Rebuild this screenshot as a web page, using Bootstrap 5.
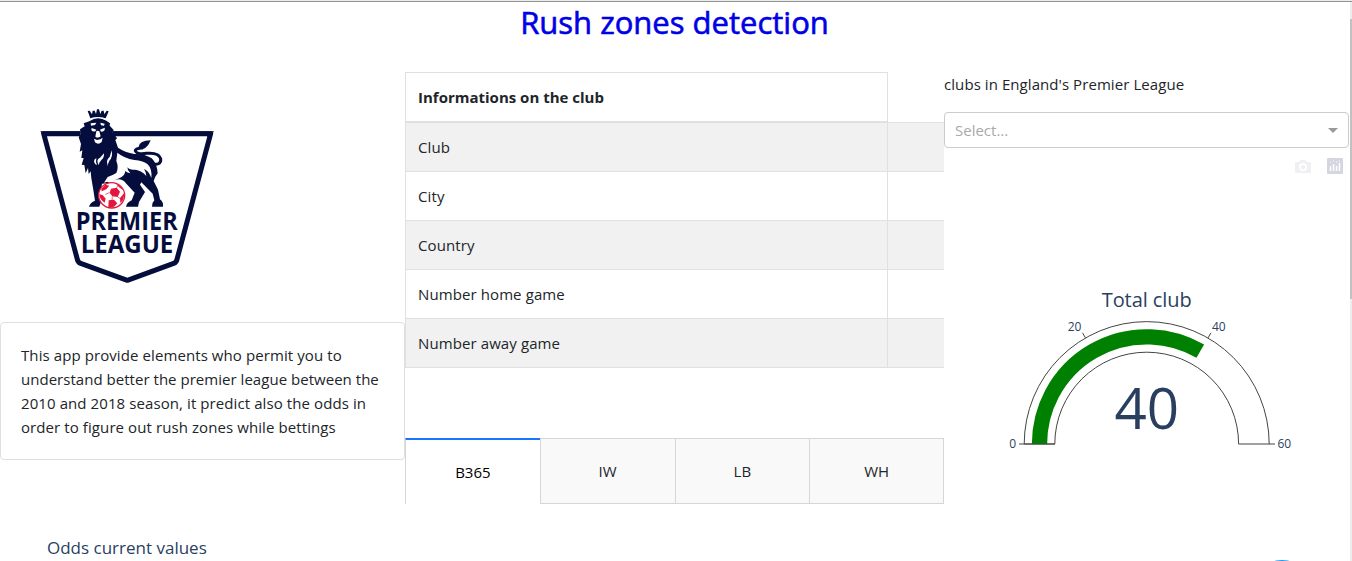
<!DOCTYPE html>
<html lang="en">
<head>
<meta charset="utf-8">
<meta name="viewport" content="width=device-width, initial-scale=1">
<title>Rush zones detection</title>
<link href="https://cdn.jsdelivr.net/npm/bootstrap@5.3.0/dist/css/bootstrap.min.css" rel="stylesheet">
<style>
body{font-family:"Open Sans","Noto Sans",sans-serif;font-size:15px;line-height:24px;color:#212529;height:561px;overflow:hidden;background:#fff}
.topline{height:2px;background:#ececec;border-bottom:1px solid #949494}
.page-body{width:1349px}
h1.title{font-size:31px;font-weight:500;line-height:38px;color:#0000e6;height:70px;padding-top:1px;-webkit-text-stroke:.6px #0000e6}
.side{width:405px}
.middle{width:539px}
.logo-box{height:250px;padding:28px 0 0 30px}
.about{height:138px;border:1px solid #dfdfdf;border-radius:4px;padding:20px}
.about span{display:block;white-space:nowrap;letter-spacing:.09px}
.about span:nth-child(2){letter-spacing:.03px}
.odds{font-size:17px;color:#2a3f5f;margin:76px 0 0 47px}
.club-wrap{height:366px}
.club-table{width:800px;table-layout:fixed;border-collapse:collapse;margin:0}
.club-table th,.club-table td{padding:12px;border:1px solid #dee0e2}
.club-table th{border-bottom-width:2px}
.club-table td{letter-spacing:.1px}
.club-table tbody tr:nth-child(odd){background:#f1f1f1}
.club-table col:first-child{width:482px}
.odds-tabs{height:66px}
.odds-tabs button{width:134.75px;background:#f9f9f9;border:1px solid #d6d6d6;border-right:0;color:#212529;padding:0}
.odds-tabs button:last-child{border-right:1px solid #d6d6d6}
.odds-tabs button.active{background:#fff;color:#000;border-top:2px solid #1975fa;border-bottom:0}
.pick{height:36px;border:1px solid #ccc;border-radius:4px;padding:0 10px;color:#aaa}
.label-line{height:40px;letter-spacing:.07px}
.modebar{height:28px;padding:10px 6px 0 0;gap:16px}
.scroll{position:fixed;right:0;top:2px;width:2px;height:559px;background:#ededed}
.scroll i{display:block;margin-top:17px;height:280px;background:#c1c1c1}
.bubble{position:fixed;left:1252px;top:560px;width:60px;height:60px;border-radius:50%;background:#119dff}
svg{display:block}
</style>
</head>
<body>
<div class="topline"></div>
<div class="page-body">
  <h1 class="title text-center m-0">Rush zones detection</h1>
  <div class="d-flex">
    <div class="side flex-shrink-0">
      <div class="logo-box">
        <svg width="195" height="190" viewBox="0 0 585 570" role="img" aria-label="Premier League">
          <path d="M41 101H542L441 478Q439 487 431 490L292 541L152 490Q144 487 142 478Z" fill="#fff" stroke="#050d3c" stroke-width="15" stroke-linejoin="round"/>
          <path d="M31 94H552L538 118L531 108H52L45 118Z" fill="#050d3c"/>
          <path d="M152 88H249V115H152Z" fill="#fff"/>
          <g transform="translate(135 0)" fill="#050d3c">
            <path d="M46 55L38 33L44 32L51 43L53 32H59L63 42L66 28H72L76 42L80 32H86L88 43L95 32L101 34L92 55Q68 47 46 55Z"/>
            <path d="M43 64Q68 46 94 62L105 70L104 77L116 90L113 97L126 115L121 120L129 143Q150 157 178 162Q207 160 230 175Q246 190 248 220Q239 231 236 243L249 269L255 298Q266 306 264 320H231Q230 309 238 301L233 281L199 247L195 254L210 276L192 306L189 320H153Q156 307 170 301L179 278L152 249Q141 234 121 239L104 249L81 251L77 276L78 305L73 320H42Q46 307 60 302L55 270L49 235L47 214L41 222L39 204L32 220L28 195L20 194L26 174L19 174L22 151L14 155L18 132L11 112L17 103L15 88L29 79L26 70Z"/>
            <path d="M204 143Q180 145 181 153Q186 164 215 160Q252 157 257 176Q260 199 225 191" fill="none" stroke="#050d3c" stroke-width="9"/>
            <path d="M191 140Q193 122 227 121Q218 144 202 148Z"/>
            <g fill="#fff">
              <path d="M127 158Q148 175 178 180Q206 182 218 193Q232 207 229 234Q221 212 207 207Q213 215 214 228Q200 211 181 209Q163 211 157 202Q157 211 166 220Q156 218 151 213Q150 229 132 235L119 241Q113 254 97 245L87 248L98 231Q113 226 124 219Q132 201 124 183Z"/>
              <path d="M110 151Q114 173 103 182Q98 191 99 199Q91 181 104 171Z"/>
              <path d="M87 160Q88 174 79 180Q71 188 72 196Q61 179 75 173Z"/>
              <path d="M64 174Q61 187 66 195Q55 191 58 179Z"/>
              <path d="M50 84L64 89L61 94Q46 96 50 84ZM75 89L89 83Q92 94 78 95ZM64 94L68 92L73 94L77 109Q69 116 61 110ZM57 116L66 120L76 118L83 113L80 126Q70 136 60 127ZM47 70L64 68L60 75L48 77ZM76 68L89 71L87 77L78 76Z"/>
            </g>
          </g>
          <ellipse cx="245" cy="286" rx="39" ry="38" fill="#fff" stroke="#e3173e" stroke-width="4"/>
          <path fill="#e3173e" d="M243 266L260 263L270 275L263 291L247 289L239 278ZM214 266L226 254L238 257L229 268L215 274ZM208 283L218 285L227 296L224 308Q209 300 208 283ZM236 301L252 299L262 310Q250 327 235 321ZM270 294L282 280Q284 300 271 309ZM258 252Q275 257 279 270L269 263Z"/>
          <path fill="none" stroke="#e3173e" stroke-width="2" d="M239 278L226 283M247 289L246 301M263 291L271 296M260 263L264 256"/>
          <g fill="#050d3c" font-family="'Open Sans',sans-serif" font-weight="700">
            <text x="137" y="391" font-size="74" textLength="306" lengthAdjust="spacingAndGlyphs">PREMIER</text>
            <text x="152" y="460" font-size="74" textLength="278" lengthAdjust="spacingAndGlyphs">LEAGUE</text>
          </g>
        </svg>
      </div>
      <div class="about"><span>This app provide elements who permit you to</span><span>understand better the premier league between the</span><span>2010 and 2018 season, it predict also the odds in</span><span>order to figure out rush zones while bettings</span></div>
      <div class="odds">Odds current values</div>
    </div>
    <div class="middle flex-shrink-0">
      <div class="club-wrap overflow-hidden">
        <table class="club-table">
          <colgroup><col><col></colgroup>
          <thead><tr><th>Informations on the club</th></tr></thead>
          <tbody>
            <tr><td>Club</td><td></td></tr>
            <tr><td>City</td><td></td></tr>
            <tr><td>Country</td><td></td></tr>
            <tr><td>Number home game</td><td></td></tr>
            <tr><td>Number away game</td><td></td></tr>
          </tbody>
        </table>
      </div>
      <div class="odds-tabs d-flex">
        <button class="active">B365</button><button>IW</button><button>LB</button><button>WH</button>
      </div>
    </div>
    <div class="side flex-shrink-0">
      <div class="label-line">clubs in England's Premier League</div>
      <div class="pick d-flex align-items-center justify-content-between"><span>Select...</span>
        <svg width="10" height="5"><path d="M0 0H10L5 5Z" fill="#999"/></svg></div>
      <div class="modebar d-flex justify-content-end">
        <svg width="16" height="16" viewBox="0 0 16 16"><path fill="#f0f0f2" fill-rule="evenodd" d="M1 4H4L5.500 2H10.500L12 4H15Q16 4 16 5V14Q16 15 15 15H1Q0 15 0 14V5Q0 4 1 4ZM8 5A4 4 0 1 0 8 13A4 4 0 1 0 8 5ZM8 7A2.200 2.200 0 1 1 8 11.400A2.200 2.200 0 1 1 8 7Z"/></svg>
        <svg width="16" height="16"><rect width="16" height="16" rx="1" fill="#d3d6df"/><path d="M3.500 8V13M6.500 6V13M9.500 8V13M12.500 5V13" stroke="#fff" stroke-width="1.500"/><path d="M3 4H4M6 3H7M9 4H10M12 3H13" stroke="#fff"/></svg>
      </div>
      <svg width="405" height="300" viewBox="944 176 405 300" font-family="'Open Sans',sans-serif" fill="#2a3f5f" text-anchor="middle">
        <path d="M1024.200 444A122.500 122.500 0 0 1 1269.200 444H1238.600A91.900 91.900 0 0 0 1054.800 444Z" fill="#fff" stroke="#444" stroke-width="1"/>
        <path d="M1039.500 444A107.200 107.200 0 0 1 1200.300 351.200" fill="none" stroke="green" stroke-width="15.300"/>
        <path d="M1019 444H1055M1269 444H1275M1085.500 337.900L1082.500 332.800M1208 337.900L1211 332.800" stroke="#444"/>
        <text x="1146.700" y="307" font-size="20" textLength="90">Total club</text>
        <text x="1146.700" y="428.500" font-size="56.500">40</text>
        <g font-size="12"><text x="1074.500" y="331">20</text><text x="1218.800" y="331">40</text><text x="1012.800" y="448">0</text><text x="1284.300" y="448">60</text></g>
      </svg>
    </div>
  </div>
</div>
<div class="scroll"><i></i></div>
<div class="bubble"></div>
<script src="https://cdn.jsdelivr.net/npm/bootstrap@5.3.0/dist/js/bootstrap.bundle.min.js"></script>
</body>
</html>
